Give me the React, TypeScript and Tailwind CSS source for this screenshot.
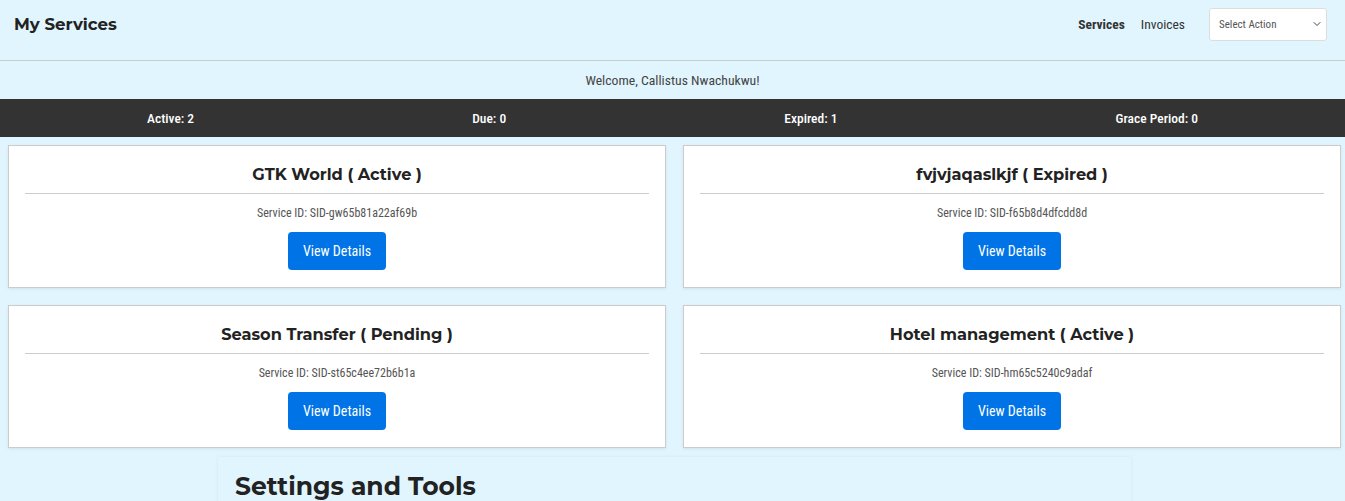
import { ChevronDown } from "lucide-react";

type Service = { name: string; status: string; sid: string };

const services: Service[] = [
  { name: "GTK World", status: "Active", sid: "SID-gw65b81a22af69b" },
  { name: "fvjvjaqaslkjf", status: "Expired", sid: "SID-f65b8d4dfcdd8d" },
  { name: "Season Transfer", status: "Pending", sid: "SID-st65c4ee72b6b1a" },
  { name: "Hotel management", status: "Active", sid: "SID-hm65c5240c9adaf" },
];

const stats = ["Active: 2", "Due: 0", "Expired: 1", "Grace Period: 0"];

const heading = { fontFamily: "Montserrat, 'DejaVu Sans', sans-serif" };
const body = { fontFamily: "'Roboto Condensed', 'Liberation Sans Narrow', Roboto, sans-serif" };

function ServiceCard({ s }: { s: Service }) {
  return (
    <div className="border border-[#cccccc] bg-white px-4 pb-[17px] pt-[17px] text-center shadow-[0_1px_3px_rgba(0,0,0,0.08)]">
      <h3 style={heading} className="text-[16.2px] font-bold leading-[22px] text-[#222]">
        {s.name} ( {s.status} )
      </h3>
      <hr className="mt-[8px] border-t border-[#cccccc]" />
      <p className="mt-[12px] text-[12px] leading-[14px] text-[#555]">Service ID: {s.sid}</p>
      <button className="mt-[12px] h-[38px] w-[98px] rounded-[4px] bg-[#0073e6] text-[14px] text-white">
        View Details
      </button>
    </div>
  );
}

export default function App() {
  return (
    <div style={body} className="min-h-screen bg-[#e1f5fe] text-[#333]">
      <header className="flex h-[61px] items-center justify-between border-b border-[#cccccc] pb-[12px] pl-[14px] pr-[18px]">
        <h1 style={heading} className="text-[16.6px] font-bold text-[#222]">
          My Services
        </h1>
        <nav className="flex items-center">
          <a className="text-[13.5px] font-bold text-[#333]">Services</a>
          <a className="ml-4 text-[13.5px] text-[#333]">Invoices</a>
          <div className="ml-6 flex h-[33px] w-[118px] items-center justify-between rounded-[3px] border border-[#dddddd] bg-white pl-[9px] pr-[3px]">
            <span className="pt-[3px] text-[11px] text-[#555]">Select Action</span>
            <ChevronDown size={12} strokeWidth={2} className="text-[#444]" />
          </div>
        </nav>
      </header>

      <div className="flex h-[38px] items-center justify-center text-[13.7px] text-[#444]">
        Welcome, Callistus Nwachukwu!
      </div>

      <div className="flex h-[38px] items-center justify-around bg-[#333333] px-2 text-[13.5px] font-medium text-white">
        {stats.map((t) => (
          <span key={t}>{t}</span>
        ))}
      </div>

      <div className="grid grid-cols-2 gap-x-[17px] gap-y-[17px] pb-[9px] pl-2 pr-1 pt-2">
        {services.map((s) => (
          <ServiceCard key={s.sid} s={s} />
        ))}
      </div>

      <section className="ml-[218px] h-[60px] w-[913px] bg-[#e1f5fe] px-[17px] pt-[11px] shadow-[0_0_4px_rgba(0,0,0,0.06)]">
        <h2 style={heading} className="text-[25px] font-bold text-[#222]">
          Settings and Tools
        </h2>
      </section>
    </div>
  );
}
